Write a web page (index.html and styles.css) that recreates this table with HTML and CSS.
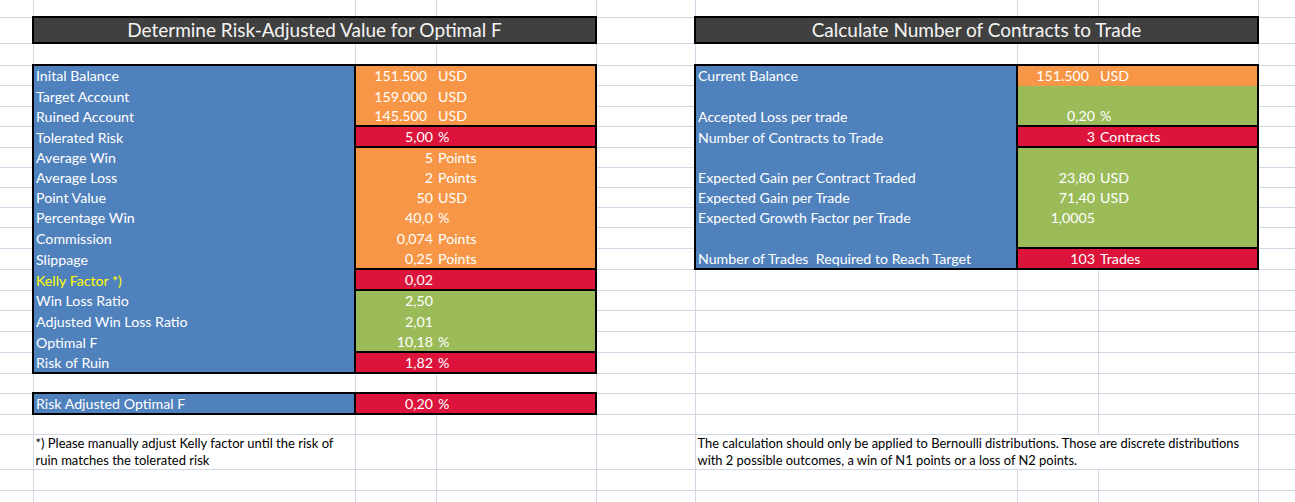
FILE: index.html
```html
<!DOCTYPE html>
<html>
<head>
<meta charset="utf-8">
<link rel="stylesheet" href="styles.css">
</head>
<body>
<table class="sheet">
  <colgroup>
    <col class="ca"><col class="cb"><col class="cc"><col class="cd"><col class="ce"><col class="cf"><col class="cg"><col class="ch"><col class="ci">
  </colgroup>
  <tbody>
    <tr class="h17"><td></td><td></td><td></td><td></td><td></td><td></td><td></td><td></td><td></td></tr>
    <tr class="h26"><td></td><th class="hd" colspan="3">Determine Risk-Adjusted Value for Optimal F</th><td></td><th class="hd" colspan="3">Calculate Number of Contracts to Trade</th><td></td></tr>
    <tr class="h22"><td></td><td></td><td></td><td></td><td></td><td></td><td></td><td></td><td></td></tr>

    <tr class="h20"><td></td>
      <td class="lbl b bt">Inital Balance</td>
      <td class="v o bt" colspan="2"><span class="n pad">151.500</span><span class="u">USD</span></td>
      <td></td>
      <td class="lbl b bt">Current Balance</td>
      <td class="v o bt" colspan="2"><span class="n pad">151.500</span><span class="u">USD</span></td>
      <td></td></tr>
    <tr class="h21"><td></td>
      <td class="lbl b">Target Account</td>
      <td class="v o" colspan="2"><span class="n pad">159.000</span><span class="u">USD</span></td>
      <td></td>
      <td class="lbl b"></td>
      <td class="v g" colspan="2"></td>
      <td></td></tr>
    <tr class="h20"><td></td>
      <td class="lbl b">Ruined Account</td>
      <td class="v o bb" colspan="2"><span class="n pad">145.500</span><span class="u">USD</span></td>
      <td></td>
      <td class="lbl b">Accepted Loss per trade</td>
      <td class="v g bb" colspan="2"><span class="n">0,20</span><span class="u">%</span></td>
      <td></td></tr>
    <tr class="h21"><td></td>
      <td class="lbl b">Tolerated Risk</td>
      <td class="v r bt bb" colspan="2"><span class="n">5,00</span><span class="u">%</span></td>
      <td></td>
      <td class="lbl b">Number of Contracts to Trade</td>
      <td class="v r bt bb" colspan="2"><span class="n">3</span><span class="u">Contracts</span></td>
      <td></td></tr>
    <tr class="h20"><td></td>
      <td class="lbl b">Average Win</td>
      <td class="v o bt" colspan="2"><span class="n">5</span><span class="u">Points</span></td>
      <td></td>
      <td class="lbl b"></td>
      <td class="v g bt" colspan="2"></td>
      <td></td></tr>
    <tr class="h20"><td></td>
      <td class="lbl b">Average Loss</td>
      <td class="v o" colspan="2"><span class="n">2</span><span class="u">Points</span></td>
      <td></td>
      <td class="lbl b">Expected Gain per Contract Traded</td>
      <td class="v g" colspan="2"><span class="n">23,80</span><span class="u">USD</span></td>
      <td></td></tr>
    <tr class="h20"><td></td>
      <td class="lbl b">Point Value</td>
      <td class="v o" colspan="2"><span class="n">50</span><span class="u">USD</span></td>
      <td></td>
      <td class="lbl b">Expected Gain per Trade</td>
      <td class="v g" colspan="2"><span class="n">71,40</span><span class="u">USD</span></td>
      <td></td></tr>
    <tr class="h20"><td></td>
      <td class="lbl b">Percentage Win</td>
      <td class="v o" colspan="2"><span class="n">40,0</span><span class="u">%</span></td>
      <td></td>
      <td class="lbl b">Expected Growth Factor per Trade</td>
      <td class="v g" colspan="2"><span class="n">1,0005</span></td>
      <td></td></tr>
    <tr class="h21"><td></td>
      <td class="lbl b">Commission</td>
      <td class="v o" colspan="2"><span class="n">0,074</span><span class="u">Points</span></td>
      <td></td>
      <td class="lbl b"></td>
      <td class="v g bb" colspan="2"></td>
      <td></td></tr>
    <tr class="h21"><td></td>
      <td class="lbl b">Slippage</td>
      <td class="v o bb" colspan="2"><span class="n">0,25</span><span class="u">Points</span></td>
      <td></td>
      <td class="lbl b bb">Number of Trades&nbsp; Required to Reach Target</td>
      <td class="v r bt bb" colspan="2"><span class="n">103</span><span class="u">Trades</span></td>
      <td></td></tr>
    <tr class="h21"><td></td>
      <td class="lbl b kelly">Kelly Factor *)</td>
      <td class="v r bt bb" colspan="2"><span class="n">0,02</span></td>
      <td></td><td></td><td></td><td></td><td></td></tr>
    <tr class="h20"><td></td>
      <td class="lbl b">Win Loss Ratio</td>
      <td class="v g bt" colspan="2"><span class="n">2,50</span></td>
      <td></td><td></td><td></td><td></td><td></td></tr>
    <tr class="h21"><td></td>
      <td class="lbl b">Adjusted Win Loss Ratio</td>
      <td class="v g" colspan="2"><span class="n">2,01</span></td>
      <td></td><td></td><td></td><td></td><td></td></tr>
    <tr class="h21"><td></td>
      <td class="lbl b">Optimal F</td>
      <td class="v g bb" colspan="2"><span class="n">10,18</span><span class="u">%</span></td>
      <td></td><td></td><td></td><td></td><td></td></tr>
    <tr class="h21"><td></td>
      <td class="lbl b bb">Risk of Ruin</td>
      <td class="v r bt bb" colspan="2"><span class="n">1,82</span><span class="u">%</span></td>
      <td></td><td></td><td></td><td></td><td></td></tr>
    <tr class="h20"><td></td><td></td><td></td><td></td><td></td><td></td><td></td><td></td><td></td></tr>
    <tr class="h21"><td></td>
      <td class="lbl b bt bb">Risk Adjusted Optimal F</td>
      <td class="v r bt bb" colspan="2"><span class="n">0,20</span><span class="u">%</span></td>
      <td></td><td></td><td></td><td></td><td></td></tr>
    <tr class="h20"><td></td><td></td><td></td><td></td><td></td><td></td><td></td><td></td><td></td></tr>
    <tr class="h34"><td></td>
      <td class="note note-l">*) Please manually adjust Kelly factor until the risk of ruin matches the tolerated risk</td>
      <td></td><td></td><td></td>
      <td class="note note-r" colspan="3">The calculation should only be applied to Bernoulli distributions. Those are discrete distributions with 2 possible outcomes, a win of N1 points or a loss of N2 points.</td>
      <td></td></tr>
    <tr class="h21"><td></td><td></td><td></td><td></td><td></td><td></td><td></td><td></td><td></td></tr>
    <tr class="h21"><td></td><td></td><td></td><td></td><td></td><td></td><td></td><td></td><td></td></tr>
  </tbody>
</table>
</body>
</html>
```

FILE: styles.css
```css
html, body {
  margin: 0;
  padding: 0;
  background: #ffffff;
  overflow: hidden;
}

body {
  font-family: Lato, "Liberation Sans", sans-serif;
}

.sheet {
  border-collapse: collapse;
  table-layout: fixed;
  width: 1318px;
}

.ca { width: 33px; }
.cb { width: 322px; }
.cc { width: 81px; }
.cd { width: 160px; }
.ce { width: 99px; }
.cf { width: 322px; }
.cg { width: 81px; }
.ch { width: 160px; }
.ci { width: 60px; }

.h17 { height: 17px; }
.h20 { height: 20px; }
.h21 { height: 21px; }
.h22 { height: 22px; }
.h26 { height: 26px; }
.h34 { height: 34px; }

.sheet td,
.sheet th {
  border: 1px solid #d0d7e5;
  padding: 0 0 1px 0;
  font-size: 14.2px;
  font-weight: normal;
  line-height: 17px;
  vertical-align: bottom;
  white-space: nowrap;
  overflow: hidden;
  color: #ffffff;
  text-align: left;
}

.sheet tr:first-child td { border-top: none; }
.sheet td:first-child { border-left: none; }

.hd {
  background: #404040;
  border: 2px solid #000000 !important;
  color: #f4f4f4 !important;
  font-size: 19px !important;
  text-align: center !important;
  vertical-align: middle !important;
  line-height: 22px !important;
  padding: 0 !important;
}

.lbl {
  padding-left: 2px !important;
}

.b { background: #4f81bd; border: 1px solid #4f81bd !important; border-left: 2px solid #000 !important; border-right: 2px solid #000 !important; }
.o { background: #f79646; border: 1px solid #f79646 !important; border-right: 2px solid #000 !important; }
.g { background: #9bbb59; border: 1px solid #9bbb59 !important; border-right: 2px solid #000 !important; }
.r { background: #dc143c; border: 1px solid #dc143c !important; border-right: 2px solid #000 !important; }

.sheet .bt { border-top: 2px solid #000000 !important; }
.sheet .bb { border-bottom: 2px solid #000000 !important; }

.kelly { color: #ffff00 !important; }

.n {
  display: inline-block;
  width: 77px;
  text-align: right;
}

.n.pad {
  width: 71px;
  padding-right: 6px;
}

.u {
  margin-left: 5px;
}

.note {
  white-space: normal !important;
  color: #000000 !important;
  padding-left: 2px !important;
  padding-bottom: 0 !important;
  line-height: 17px !important;
}

.note-l {
  font-size: 13px !important;
  padding-right: 12px !important;
}

.note-r {
  font-size: 12.9px !important;
  padding-right: 18px !important;
}
```
